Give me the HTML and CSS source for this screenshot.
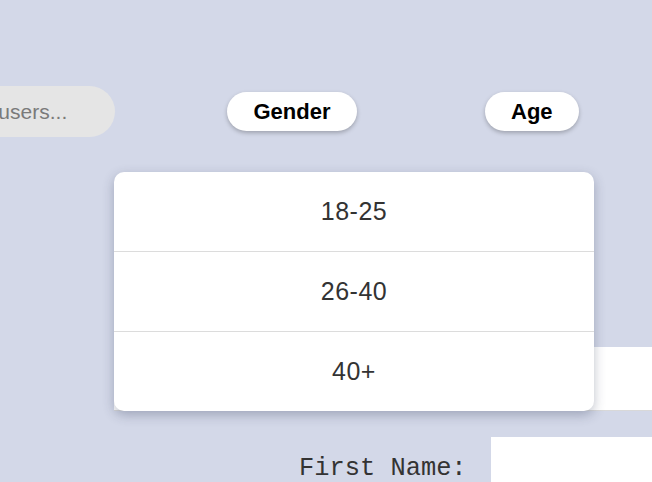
FILE: index.html
```html
<!DOCTYPE html>
<html lang="en">
<head>
<meta charset="utf-8">
<title>Users</title>
<link rel="stylesheet" href="styles.css">
</head>
<body>
<div class="page">
  <div class="toolbar">
    <input class="search" type="text" placeholder="Search users...">
    <button class="filter filter-gender" type="button">Gender</button>
    <div class="filter-wrap">
      <button class="filter" type="button">Age</button>
    </div>
  </div>
  <ul class="dropdown">
    <li class="option">18-25</li>
    <li class="option">26-40</li>
    <li class="option">40+</li>
  </ul>
  <div class="panel"></div>
  <form class="form-row">
    <label class="label" for="first">First Name:</label>
    <input class="field" id="first" type="text">
  </form>
</div>
</body>
</html>
```
FILE: styles.css
```css
html, body {
  margin: 0;
  padding: 0;
}
body {
  background: #d3d8e8;
  width: 652px;
  height: 482px;
  overflow: hidden;
  font-family: "Liberation Sans", Arial, sans-serif;
}
.page {
  position: relative;
  width: 652px;
  height: 482px;
  overflow: hidden;
}
.toolbar {
  display: flex;
  align-items: center;
  padding-top: 86px;
  height: 51px;
}
.search {
  box-sizing: border-box;
  width: 200px;
  height: 51px;
  margin-left: -85px;
  padding: 0 0 0 11px;
  border: none;
  border-radius: 26px;
  background: #e5e5e5;
  font-family: "Liberation Sans", Arial, sans-serif;
  font-size: 21px;
  color: #333;
  outline: none;
  flex-shrink: 0;
}
.search::placeholder {
  color: #7a7a7a;
}
.filter {
  box-sizing: border-box;
  height: 39px;
  padding: 0 26px;
  border: none;
  border-radius: 20px;
  background: #fff;
  box-shadow: 0 2px 4px rgba(0, 0, 0, 0.25);
  font-family: "Liberation Sans", Arial, sans-serif;
  font-weight: bold;
  font-size: 22px;
  color: #000;
}
.filter-gender {
  margin-left: 112px;
  padding: 0 26.5px;
}
.filter-wrap {
  margin-left: 128px;
}
.dropdown {
  position: absolute;
  left: 114px;
  top: 172px;
  width: 480px;
  margin: 0;
  padding: 0;
  list-style: none;
  background: #fff;
  border-radius: 10px;
  box-shadow: 0 4px 12px rgba(40, 50, 80, 0.3);
  z-index: 2;
}
.option {
  height: 79px;
  display: flex;
  align-items: center;
  justify-content: center;
  font-family: "Liberation Sans", Arial, sans-serif;
  font-size: 25px;
  letter-spacing: 0.5px;
  color: #333;
}
.option + .option {
  border-top: 1px solid #dcdcdc;
}
.panel {
  margin-top: 210px;
  margin-left: 114px;
  height: 63px;
  background: #fff;
  border-bottom: 1px solid #d8d8d8;
}
.form-row {
  display: flex;
  align-items: flex-start;
  margin: 26px 0 0;
  padding-left: 299px;
}
.label {
  padding-top: 17px;
  font-family: "Liberation Mono", "Courier New", monospace;
  font-size: 25.4px;
  color: #333;
  white-space: nowrap;
}
.field {
  box-sizing: border-box;
  width: 161px;
  height: 50px;
  margin-left: 24px;
  border: none;
  background: #fff;
  flex-shrink: 0;
}
```
